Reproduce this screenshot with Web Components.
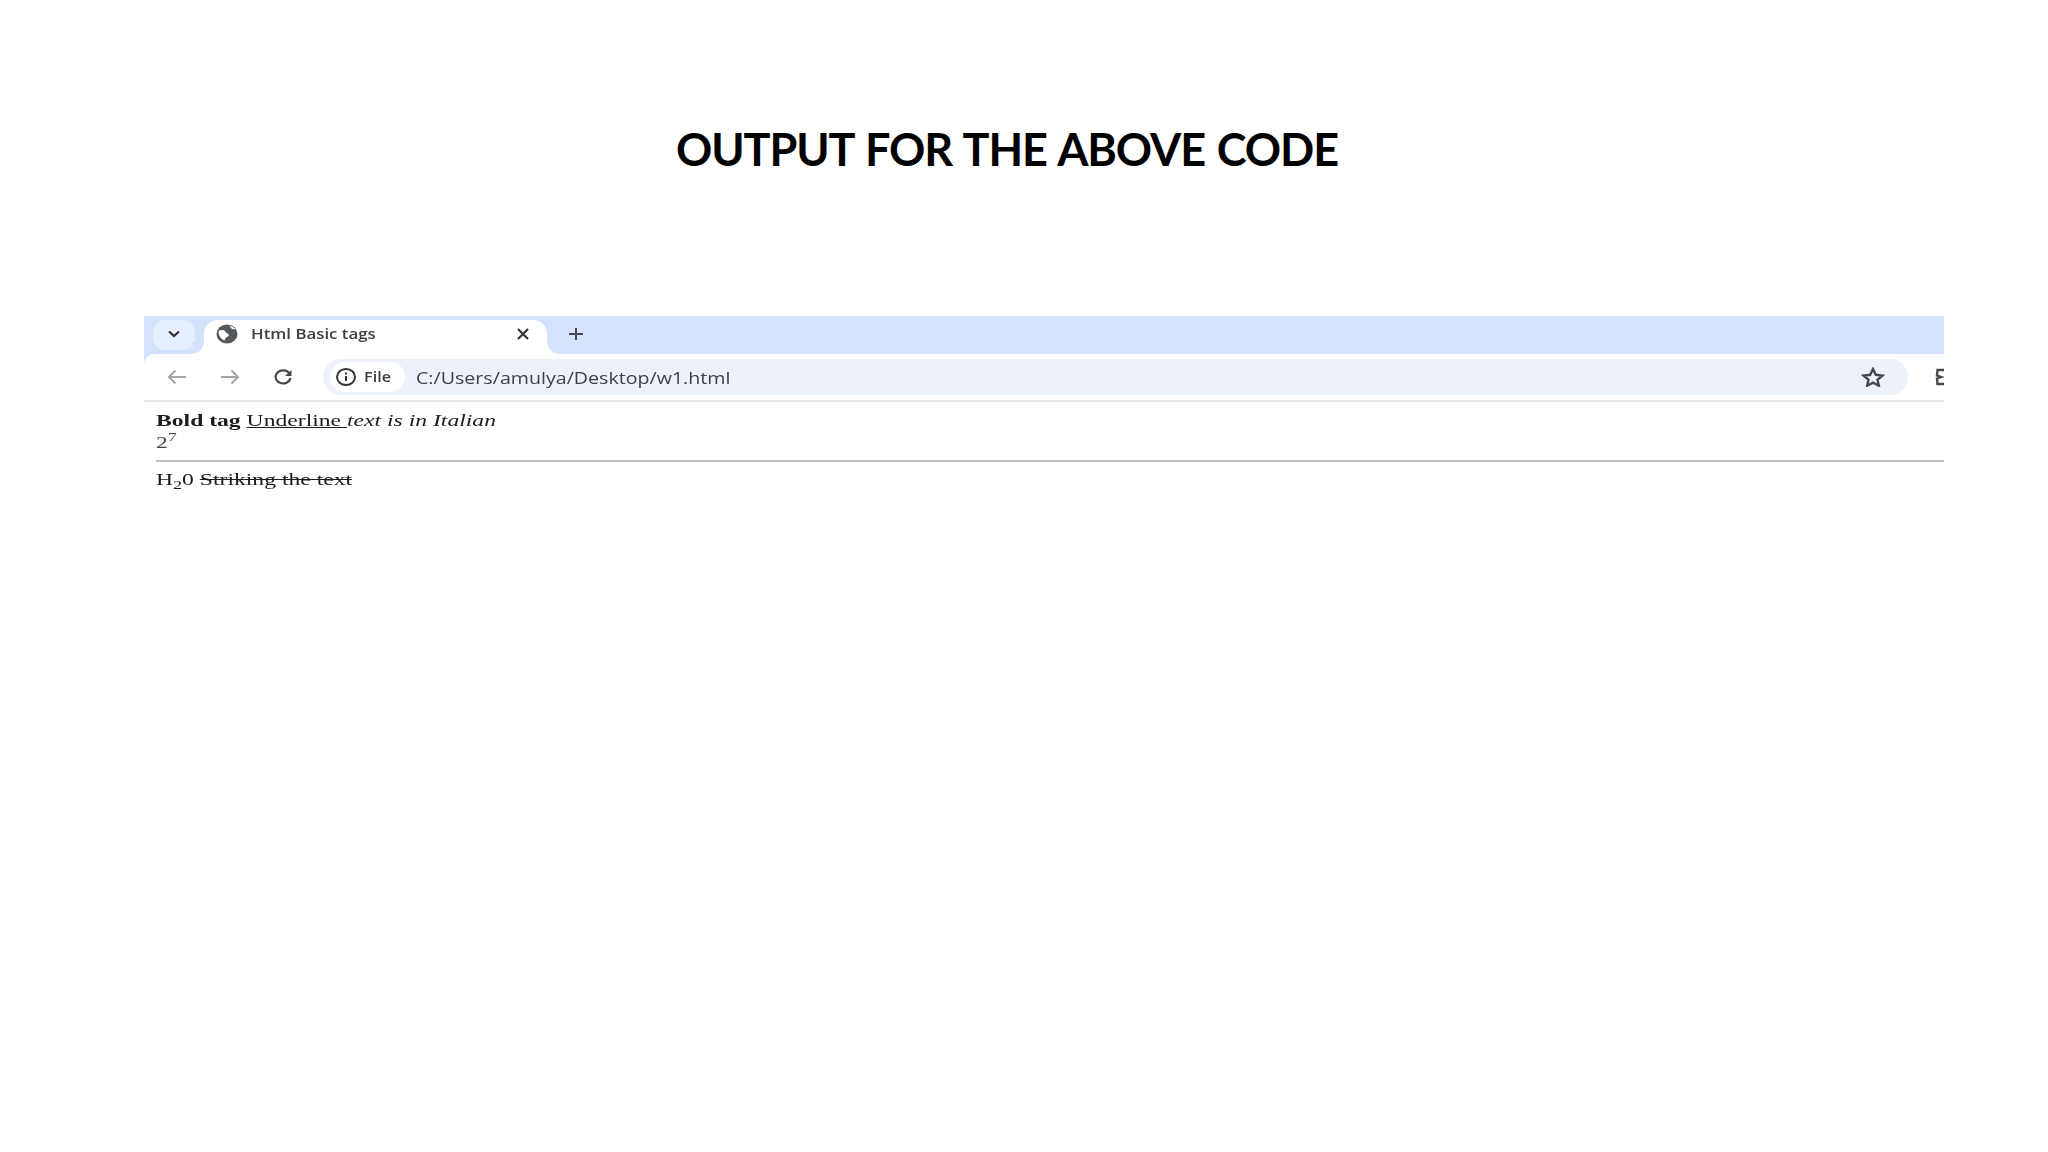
<!DOCTYPE html>
<html>
<head>
<meta charset="utf-8">
<title>Output</title>
<style>
    html, body { margin: 0; background: #fff; }
</style>
</head>
<body>
<slide-page>
    <span slot="title">OUTPUT FOR THE ABOVE CODE</span>
    <browser-shot tab-title="Html Basic tags" url="C:/Users/amulya/Desktop/w1.html">
        <page-text></page-text>
    </browser-shot>
</slide-page>

<script>
class SlidePage extends HTMLElement {
    constructor() {
        super();
        this.attachShadow({ mode: 'open' });
    }

    connectedCallback() {
        this.shadowRoot.innerHTML = `
            <style>
                :host {
                    display: block;
                    width: 2048px;
                    height: 1152px;
                    overflow: hidden;
                    background: #fff;
                }
                h1 {
                    margin: 0;
                    padding: 120px 34px 0 0;
                    height: 316px;
                    box-sizing: border-box;
                    text-align: center;
                    font: 700 45px/58px Lato, sans-serif;
                    letter-spacing: -1.1px;
                    word-spacing: 2px;
                    color: #000;
                }
                .body { padding-left: 144px; width: 1800px; }
            </style>
            <h1><slot name="title"></slot></h1>
            <div class="body"><slot></slot></div>
        `;
    }
}

class BrowserShot extends HTMLElement {
    constructor() {
        super();
        this.attachShadow({ mode: 'open' });
    }

    connectedCallback() {
        const title = this.getAttribute('tab-title') || '';
        const url = this.getAttribute('url') || '';
        this.shadowRoot.innerHTML = `
            <style>
                :host {
                    display: block;
                    width: 1800px;
                    overflow: hidden;
                    background: #d3e3fd;
                    font-family: "Open Sans", "Noto Sans", sans-serif;
                    color: #3c4043;
                    filter: blur(0.45px);
                }
                svg { display: block; flex: none; }
                .wide { display: inline-block; transform-origin: left center; white-space: nowrap; }
                .strip {
                    height: 38px;
                    background: #d3e3fd;
                    display: flex;
                    align-items: flex-end;
                    padding-left: 9px;
                }
                .tabs-btn {
                    width: 42px;
                    height: 30px;
                    margin-bottom: 4px;
                    border-radius: 12px;
                    background: #e6effd;
                    display: flex;
                    align-items: center;
                    justify-content: center;
                    padding-bottom: 2px;
                    box-sizing: border-box;
                }
                .tab {
                    position: relative;
                    width: 343px;
                    height: 34px;
                    margin-left: 9px;
                    box-sizing: border-box;
                    padding: 0 17px 7px 12px;
                    background: #fff;
                    border-radius: 14px 14px 0 0;
                    display: flex;
                    align-items: center;
                    font-size: 14.5px;
                    font-weight: 600;
                }
                /* flared bottom corners of the active tab */
                .tab::before, .tab::after {
                    content: "";
                    position: absolute;
                    bottom: 0;
                    width: 12px;
                    height: 12px;
                }
                .tab::before { left: -12px; background: radial-gradient(circle at 0 0, #d3e3fd 11.5px, #fff 12px); }
                .tab::after { right: -12px; background: radial-gradient(circle at 100% 0, #d3e3fd 11.5px, #fff 12px); }
                .title { margin-left: 13px; flex: 1; }
                .title .wide { transform: scaleX(1.16); }
                .new-tab { margin: 0 0 13px 21px; }
                .toolbar {
                    height: 48px;
                    border-bottom: 2px solid #e9e9e9;
                    border-top-left-radius: 10px;
                    box-sizing: border-box;
                    display: flex;
                    align-items: center;
                    padding: 0 0 0 23px;
                    background: #fff;
                }
                .toolbar .nav { margin-right: 33px; }
                .omni {
                    width: 1585px;
                    height: 36px;
                    margin-left: -3px;
                    background: #edf2fa;
                    border-radius: 18px;
                    display: flex;
                    align-items: center;
                    padding: 0 23px 0 7px;
                    box-sizing: border-box;
                    flex: none;
                }
                .chip {
                    width: 75px;
                    height: 30px;
                    box-sizing: border-box;
                    padding-left: 6px;
                    background: #fff;
                    border-radius: 15px;
                    display: flex;
                    align-items: center;
                    gap: 8px;
                    font-size: 13.5px;
                    font-weight: 600;
                }
                .chip .wide { transform: scaleX(1.2); }
                .url {
                    margin-left: 11px;
                    padding-top: 1px;
                    flex: 1;
                    font-size: 15.7px;
                    color: #3c4043;
                }
                .url .wide { transform: scaleX(1.25); }
                .ext { margin-left: 26px; flex: none; }
            </style>
            <div class="strip">
                <div class="tabs-btn">
                    <svg width="14" height="10" viewBox="0 0 14 10"><path d="M2 2.500 7 7l5-4.500" fill="none" stroke="#2f3337" stroke-width="2.200"/></svg>
                </div>
                <div class="tab">
                    <svg width="22" height="20" viewBox="0 0 22 20">
                        <ellipse cx="11" cy="10" rx="10.500" ry="9.500" fill="#55585c"/>
                        <path d="M3 6.500c2-.5 4-1 5.500 0s1 2.500 3 3 1.500 3-.5 3.500-1.500 3.500-3 3.500C5 15 3 12 2.500 9zM13 1.800c2 1.200 1.500 2.700 3.500 3.200l3 .5C18 3.500 15.500 2 13 1.800z" fill="#fff"/>
                    </svg>
                    <span class="title"><span class="wide">${title}</span></span>
                    <svg width="14" height="12" viewBox="0 0 14 12"><path d="M2 1l10 10M12 1 2 11" stroke="#303337" stroke-width="2.200"/></svg>
                </div>
                <svg class="new-tab" width="16" height="14" viewBox="0 0 16 14"><path d="M8 1v12M1 7h14" stroke="#45494d" stroke-width="2"/></svg>
            </div>
            <div class="toolbar">
                <svg class="nav" width="20" height="16" viewBox="0 0 20 16"><path d="M19 8H2M8.500 1.500 2 8l6.500 6.500" fill="none" stroke="#a3a6aa" stroke-width="2"/></svg>
                <svg class="nav" width="20" height="16" viewBox="0 0 20 16"><path d="M1 8h17M11.500 1.500 18 8l-6.500 6.500" fill="none" stroke="#a3a6aa" stroke-width="2"/></svg>
                <svg class="nav" width="20" height="16" viewBox="0 0 20 16" style="margin-right:33px"><path d="M16.500 4.500A7.500 6.500 0 1 0 17.500 9" fill="none" stroke="#45494d" stroke-width="2.200"/><path d="M18.500 1v6h-6.500z" fill="#45494d"/></svg>
                <div class="omni">
                    <div class="chip">
                        <svg width="20" height="18" viewBox="0 0 20 18"><ellipse cx="10" cy="9" rx="9" ry="8" fill="none" stroke="#303337" stroke-width="2"/><path d="M10 8v5M10 4.500v2" stroke="#303337" stroke-width="2"/></svg>
                        <span class="wide">File</span>
                    </div>
                    <div class="url"><span class="wide">${url}</span></div>
                    <svg width="24" height="20" viewBox="0 0 24 20"><path d="M12 2l2.800 5.800 6.700.8-5 4.200 1.400 6L12 15.700 6.100 18.800l1.400-6-5-4.200 6.700-.8z" fill="none" stroke="#45494d" stroke-width="2.400"/></svg>
                </div>
                <svg class="ext" width="12" height="18" viewBox="0 0 12 18"><path d="M11 2H3.500L3 7.500 7 9l-4 1.500.5 5.500H11" fill="none" stroke="#45494d" stroke-width="2.400"/></svg>
            </div>
            <slot></slot>
        `;
    }
}

class PageText extends HTMLElement {
    constructor() {
        super();
        this.attachShadow({ mode: 'open' });
    }

    connectedCallback() {
        this.shadowRoot.innerHTML = `
            <style>
                :host {
                    display: block;
                    background: #fff;
                    font-family: "Liberation Serif", serif;
                    font-size: 17px;
                    color: #1c1c1c;
                    padding-top: 8px;
                }
                .stretch {
                    transform: scaleX(1.39);
                    transform-origin: left center;
                    white-space: nowrap;
                    margin-left: 12px;
                    height: 21px;
                    line-height: 21px;
                }
                .two { height: 24px; line-height: 24px; color: #444; }
                sup, sub { font-size: 13px; line-height: 0; }
                hr {
                    margin: 5px 0 7px 12px;
                    border: 0;
                    height: 2px;
                    background: #c2c2c2;
                }
            </style>
            <div class="stretch"><b>Bold tag</b> <u>Underline </u><i>text is in Italian</i></div>
            <div class="stretch two">2<sup>7</sup></div>
            <hr>
            <div class="stretch">H<sub>2</sub>0 <s>Striking the text</s></div>
        `;
    }
}

customElements.define('slide-page', SlidePage);
customElements.define('browser-shot', BrowserShot);
customElements.define('page-text', PageText);
</script>
</body>
</html>
